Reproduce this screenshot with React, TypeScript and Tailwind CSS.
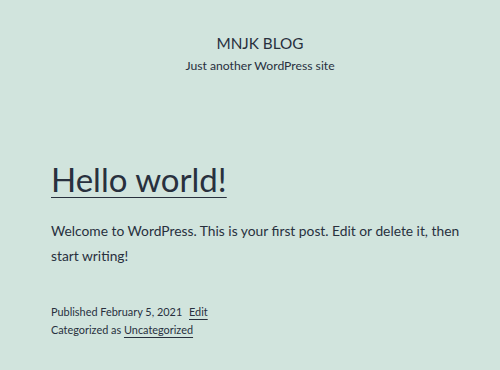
export default function App() {
  return (
    <div
      className="w-[500px] h-[370px] bg-[#d1e4dd] text-[#28303d] overflow-hidden"
      style={{ fontFamily: 'Lato, "Noto Sans", sans-serif' }}
    >
      <header className="flex flex-col items-center pt-[31px] pl-[20px]">
        <p className="text-[15.3px] leading-[24px]">MNJK BLOG</p>
        <p className="text-[12.2px] leading-[18px] mt-[2px]">Just another WordPress site</p>
      </header>
      <main className="pl-[51px] pr-[30px] pt-[82px]">
        <h1 className="text-[33px] leading-[44px]">
          <a className="underline decoration-[1px] underline-offset-[5px]">Hello world!</a>
        </h1>
        <p className="text-[13.8px] leading-[25px] mt-[17px]">
          Welcome to WordPress. This is your first post. Edit or delete it, then start writing!
        </p>
        <div className="text-[10.9px] leading-[18px] mt-[35px]">
          <p>
            Published February 5, 2021{" "}
            <a className="underline underline-offset-[3px] ml-[4px]">Edit</a>
          </p>
          <p>
            Categorized as <a className="underline underline-offset-[3px]">Uncategorized</a>
          </p>
        </div>
      </main>
    </div>
  );
}
